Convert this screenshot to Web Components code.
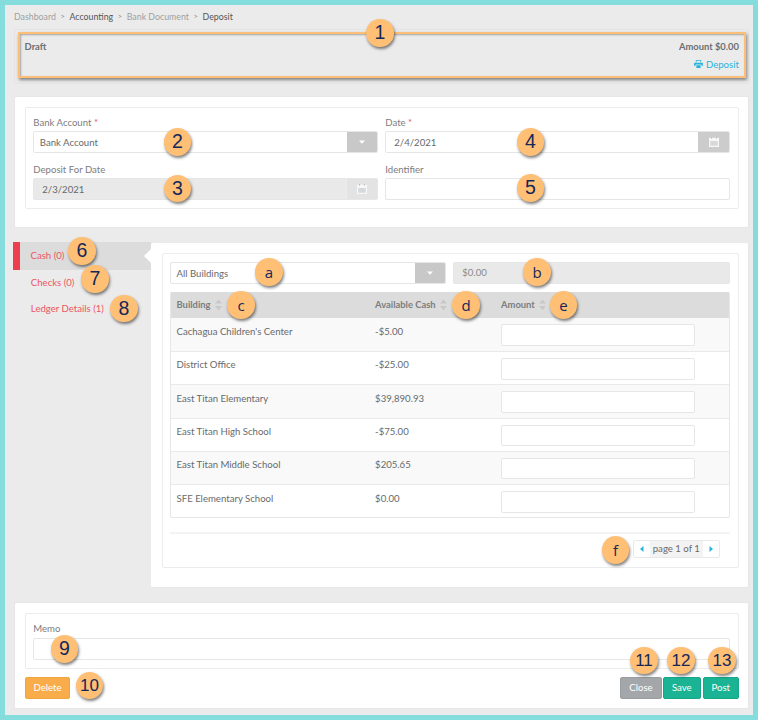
<!DOCTYPE html>
<html lang="en"><head><meta charset="utf-8"><title>Deposit</title>
<style>
html,body{margin:0;padding:0;background:#ebebeb}
body{font-family:Lato,"Open Sans",sans-serif;font-size:9.6px;color:#676a6c}
</style></head><body>
<app-shell>
  <bread-crumb></bread-crumb>
  <status-bar></status-bar>
  <white-card class="top">
    <inner-panel style="--pad:8px 0 0 7.6px;--h:102.5px">
      <form-grid>
        <form-field label="Bank Account" required><select-box value="Bank Account"></select-box></form-field>
        <form-field label="Date" required><date-box value="2/4/2021"></date-box></form-field>
        <form-field label="Deposit For Date"><date-box value="2/3/2021" disabled></date-box></form-field>
        <form-field label="Identifier"><text-box></text-box></form-field>
      </form-grid>
    </inner-panel>
  </white-card>
  <tab-area>
    <side-tabs slot="tabs"></side-tabs>
    <cash-panel></cash-panel>
  </tab-area>
  <memo-card></memo-card>
  <call-out x="380" y="33">1</call-out>
  <call-out x="177.5" y="142">2</call-out>
  <call-out x="177.5" y="188.5">3</call-out>
  <call-out x="530.5" y="142">4</call-out>
  <call-out x="530.5" y="188">5</call-out>
  <call-out x="82" y="251">6</call-out>
  <call-out x="95" y="279">7</call-out>
  <call-out x="124" y="308.5">8</call-out>
  <call-out x="269" y="272" thin>a</call-out>
  <call-out x="537" y="272" thin>b</call-out>
  <call-out x="241" y="305" thin>c</call-out>
  <call-out x="466" y="305" thin>d</call-out>
  <call-out x="563.5" y="305" thin>e</call-out>
  <call-out x="615.5" y="550" thin>f</call-out>
  <call-out x="64.5" y="649">9</call-out>
  <call-out x="89.5" y="685.5">10</call-out>
  <call-out x="644" y="660.5">11</call-out>
  <call-out x="681" y="660.5">12</call-out>
  <call-out x="722" y="660.5">13</call-out>
</app-shell>
<script>
const CTRL=`box-sizing:border-box;height:21.4px;border:1px solid #e5e6e7;border-radius:2px;background:#fff;font-size:9.6px;color:#676a6c;`;
const CAL=`<svg width="10" height="10" viewBox="0 0 10 10" aria-hidden="true"><path fill="#f7f7f7" d="M0 .8h10V10H0z"/><path fill="#d6d9db" d="M1.2 4h7.6v4.8H1.2z"/><path fill="#b9b9b9" d="M2 0h1v1.6H2zM7 0h1v1.6H7z"/></svg>`;
const CARET=`<svg width="6" height="4" viewBox="0 0 6 4" aria-hidden="true"><path fill="#fff" d="M0 .5h6L3 3.7z"/></svg>`;
const SORT=`<svg width="7" height="12" viewBox="0 0 7 12" aria-hidden="true"><path fill="#c8c8c8" d="M3.5 .5 7 4.6H0zM0 7h7l-3.5 4.2z"/></svg>`;
function def(name,html,init){
  customElements.define(name,class extends HTMLElement{
    connectedCallback(){
      if(this.shadowRoot)return;
      const r=this.attachShadow({mode:"open"});
      r.innerHTML=typeof html==="function"?html(this):html;
      if(init)init(this,r);
    }
  });
}
def("app-shell",`<style>:host{display:block;box-sizing:border-box;position:relative;width:758px;height:720px;border:5px solid #84dcdd;background:#ebebeb;padding:0 3.7px 0 9px;overflow:hidden;font-family:Lato,"Open Sans",sans-serif;font-size:9.6px;color:#676a6c}</style><slot></slot>`);
def("bread-crumb",`<style>:host{display:flex;align-items:center;height:24.3px;padding-bottom:2px;box-sizing:border-box;font-size:8.8px;color:#9f9f9f;gap:4.6px}
b{font-weight:400;color:#555}i{font-style:normal;font-size:7.5px;color:#8a8a8a}</style>
<span>Dashboard</span><i>&gt;</i><b>Accounting</b><i>&gt;</i><span>Bank Document</span><i>&gt;</i><b>Deposit</b>`);
def("status-bar",`<style>:host{display:block;position:relative;box-sizing:border-box;height:55px;border:1px solid #e4e4e4;border-radius:2px;margin-bottom:11.7px;padding:10px 9.4px 0 9.6px;color:#676a6c}
.row{display:flex;justify-content:space-between;font-weight:700;font-size:9.4px;height:17.5px;line-height:13px;color:#6d6f71}
.dep{display:flex;justify-content:flex-end;align-items:center;gap:3px;color:#29b3dc;line-height:13px}
.hi{position:absolute;left:3px;top:2px;width:727.5px;height:46px;box-sizing:border-box;border:2px solid #fdbf78;box-shadow:1px 2px 3px rgba(0,0,0,.45),inset 1px 1px 2px rgba(0,0,0,.3);pointer-events:none}</style>
<div class="row"><span>Draft</span><span>Amount $0.00</span></div>
<div class="dep"><svg width="9" height="8" viewBox="0 0 10 9" aria-hidden="true"><path fill="#29b3dc" d="M2 0h6v2.6H7.2V.8H2.8v1.8H2zM.9 3h8.2c.5 0 .9.4.9.9v2.6H8.2V5.2H1.8v1.3H0V3.9C0 3.4.4 3 .9 3zM2.6 6h4.8v3H2.6z"/></svg><span>Deposit</span></div>
<div class="hi"></div>`);
def("white-card",`<style>:host{display:block;box-sizing:border-box;background:#fff;border:1px solid #e7e7e7;border-radius:2px;height:132.3px;padding:9.7px 9.7px 0;margin-bottom:14px}</style><slot></slot>`);
def("inner-panel",`<style>:host{display:block;box-sizing:border-box;border:1px solid #ececec;border-radius:2px;padding:var(--pad,8px);height:var(--h,auto)}</style><slot></slot>`);
def("form-grid",`<style>:host{display:grid;grid-template-columns:344.7px 344.7px;column-gap:7.3px;row-gap:0}</style><slot></slot>`);
def("form-field",h=>`<style>:host{display:block;height:47px}
label{display:block;height:15.6px;line-height:13px;font-size:9.6px;color:#7d7d7d}
i{font-style:normal;color:#ed5565}</style><label>${h.getAttribute("label")}${h.hasAttribute("required")?' <i>*</i>':''}</label><slot></slot>`);
def("select-box",h=>`<style>:host{display:flex;${CTRL}overflow:hidden}
span{flex:1;padding-left:5.5px;line-height:21px}
b{width:30px;background:#c8c8c8;display:flex;align-items:center;justify-content:center}</style><span>${h.getAttribute("value")}</span><b>${CARET}</b>`);
def("date-box",h=>{const d=h.hasAttribute("disabled");return `<style>:host{display:flex;${CTRL}overflow:hidden;${d?'background:#e9e9e9;':''}}
span{flex:1;padding-left:8px;line-height:21px}
b{width:30.5px;background:${d?'#e3e3e3':'#cccccc'};display:flex;align-items:center;justify-content:center;${d?'border-left:1px solid #ececec;box-sizing:border-box':''}}</style><span>${h.getAttribute("value")}</span><b>${CAL}</b>`});
def("text-box",`<style>:host{display:block;${CTRL}}</style>`);
def("tab-area",`<style>:host{display:grid;grid-template-columns:137.4px 598.6px;margin-left:-.7px;height:345px;margin-bottom:14.7px}</style><slot name="tabs"></slot><slot></slot>`);
def("side-tabs",`<style>:host{display:block;position:relative}
div{box-sizing:border-box;height:26.5px;padding-left:17.5px;line-height:26px;font-size:9.6px;color:#ed5565}
.on{height:27.7px;line-height:28px;background:#dcdcdc;border-left:7.3px solid #ed3f4d;padding-left:10.2px;position:relative}
.on::after{content:"";position:absolute;right:0;top:7px;border:7px solid transparent;border-right-color:#fff;border-left-width:0}</style>
<div class="on">Cash (0)</div><div>Checks (0)</div><div>Ledger Details (1)</div>`);
def("cash-panel",`<style>:host{display:block;box-sizing:border-box;background:#fff;border-radius:2px;margin-top:1px;height:344.3px;padding:10px 9.8px 0 11px;border-right:1px solid #e7e7e7;border-bottom:1px solid #e7e7e7}
.in{box-sizing:border-box;height:315px;border:1px solid #ececec;border-radius:2px;padding:8px 8px 0 7.3px}
.top{display:grid;grid-template-columns:276.3px 276.4px;column-gap:7px;height:30px}
.amt{${CTRL}background:#e9e9e9;padding-left:8px;line-height:20.5px;color:#8a8a8a}
hr{border:0;height:1.4px;background:#f3f3f3;margin:14px 0 6.6px}
.pg{display:flex;justify-content:flex-end;padding-right:10px}</style>
<div class="in"><div class="top"><select-box value="All Buildings"></select-box><div class="amt">$0.00</div></div>
<cash-table></cash-table><hr><div class="pg"><page-nav></page-nav></div></div>`);
def("cash-table",()=>{
  const rows=[["Cachagua Children's Center","-$5.00"],["District Office","-$25.00"],["East Titan Elementary","$39,890.93"],["East Titan High School","-$75.00"],["East Titan Middle School","$205.65"],["SFE Elementary School","$0.00"]];
  const th=(t)=>`<th><span>${t}</span>${SORT}</th>`;
  return `<style>:host{display:block;box-sizing:border-box;height:226px;border-left:1px solid #e7e7e7;border-right:1px solid #e7e7e7;border-bottom:1px solid #e7e7e7;border-radius:2px}
table{border-collapse:collapse;table-layout:fixed;width:100%;font-size:9.6px}
th{height:26px;padding:0 0 0 5.5px;background:#dcdcdc;text-align:left;font-weight:700;font-size:9.4px;color:#7b7d7e;box-sizing:border-box}
th span{margin-right:4px}th svg{vertical-align:-3px}
td{height:33.33px;box-sizing:border-box;vertical-align:top;padding:6.3px 0 0 5.5px;line-height:13px;border-top:1px solid #e9e9e9;color:#676a6c}
tr:first-child td{border-top:0}
tr:last-child td{height:32.33px}
tr:nth-child(odd) td{background:#f9f9f9}
.i{display:block;${CTRL}width:193.5px;margin-top:-.3px}</style>
<table><colgroup><col style="width:198.6px"><col style="width:126px"><col></colgroup>
<thead><tr>${th("Building")}${th("Available Cash")}${th("Amount")}</tr></thead>
<tbody>${rows.map(r=>`<tr><td>${r[0]}</td><td>${r[1]}</td><td><div class="i"></div></td></tr>`).join("")}</tbody></table>`});
def("page-nav",`<style>:host{display:flex;box-sizing:border-box;width:86.4px;height:17.4px;border:1px solid #e9e9e9;border-radius:2px;font-size:9.6px;color:#676a6c}
b{width:16px;display:flex;align-items:center;justify-content:center}
span{flex:1;background:#f3f3f3;text-align:center;line-height:15.4px;white-space:nowrap}</style>
<b><svg width="4" height="6" viewBox="0 0 4 6" aria-hidden="true"><path fill="#29b3dc" d="M3.5 0v6L0 3z"/></svg></b><span>page 1 of 1</span><b><svg width="4" height="6" viewBox="0 0 4 6" aria-hidden="true"><path fill="#29b3dc" d="M.5 0v6L4 3z"/></svg></b>`);
def("memo-card",`<style>:host{display:block;box-sizing:border-box;background:#fff;border:1px solid #e7e7e7;border-radius:2px;height:107px;padding:9.7px 9.7px 0}
.in{box-sizing:border-box;height:56.3px;border:1px solid #ececec;border-radius:2px;padding:8px 8px 0 7.6px;margin-bottom:8px}
label{display:block;height:16.6px;line-height:13px;color:#7d7d7d}
.row{display:flex;gap:1.3px}.sp{flex:1}</style>
<div class="in"><label>Memo</label><text-box></text-box></div>
<div class="row"><act-btn color="#f8ac4a" bd="#f0a33f" w="45.6">Delete</act-btn><div class="sp"></div><act-btn color="#a3a7aa" bd="#999da0" w="41.4">Close</act-btn><act-btn color="#1ab394" bd="#18a689" w="37.7">Save</act-btn><act-btn style="margin-left:1px" color="#1ab394" bd="#18a689" w="35.7">Post</act-btn></div>`);
def("act-btn",h=>`<style>:host{display:flex;align-items:center;justify-content:center;box-sizing:border-box;height:21.7px;width:${h.getAttribute("w")}px;background:${h.getAttribute("color")};border:1px solid ${h.getAttribute("bd")};border-radius:2px;color:#fff;font-size:9.6px}</style><slot></slot>`);
def("call-out",h=>{const x=+h.getAttribute("x"),y=+h.getAttribute("y"),t=h.hasAttribute("thin");return `<style>:host{position:absolute;left:${x-5-13.75}px;top:${y-5-13.75}px;width:27.5px;height:27.5px;border-radius:50%;background:#ffbf75;box-shadow:1px 2px 3px rgba(0,0,0,.5);display:flex;align-items:center;justify-content:center;font-family:${t?'"Open Sans","Liberation Sans"':'"Liberation Sans"'},sans-serif;font-size:${t?15:(h.textContent.length>1?17:19.5)}px;color:#14275a;line-height:1}</style><slot></slot>`});
</script>
</body></html>
